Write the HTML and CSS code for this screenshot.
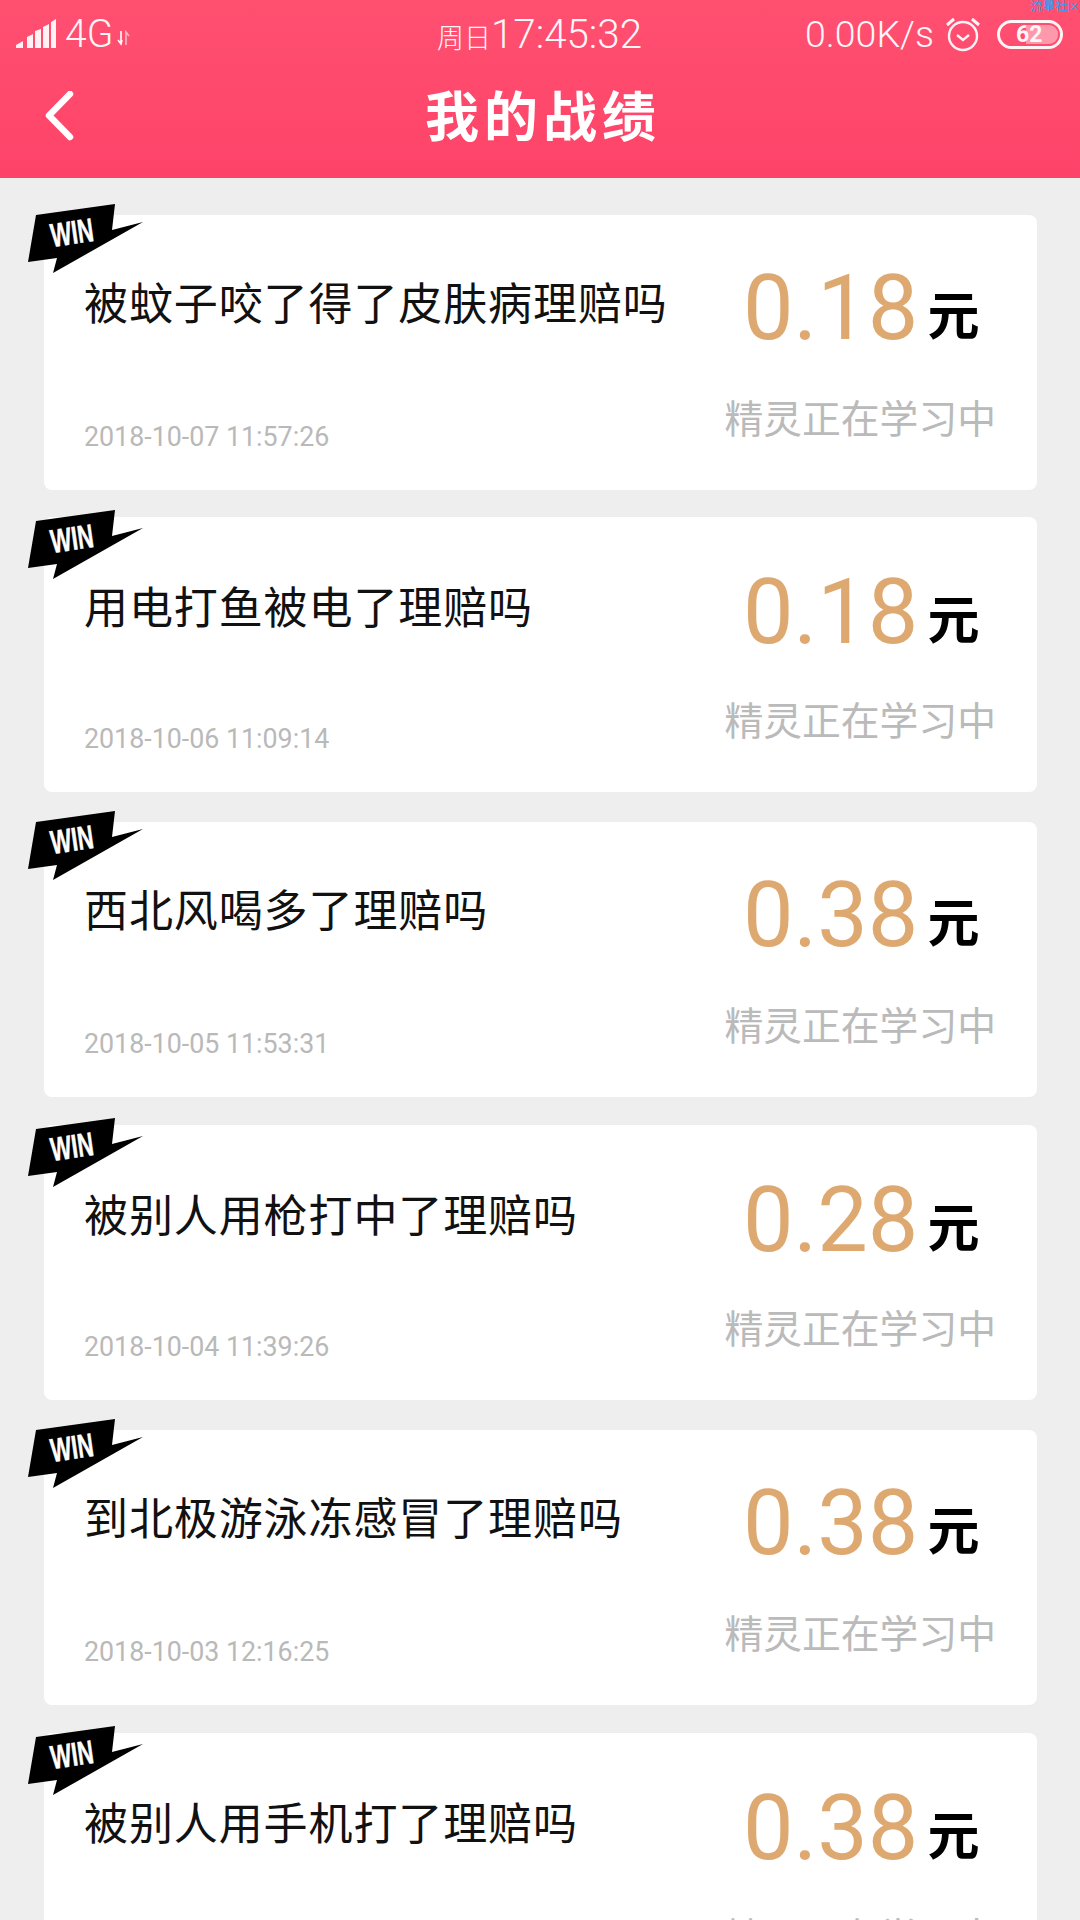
FILE: index.html
```html
<!DOCTYPE html>
<html lang="en">
  <head>
    <meta charset="UTF-8" />
    <title>我的战绩</title>
    <link rel="stylesheet" href="styles.css">
  </head>
  <body>
    <div class="page">
      <div class="watermark">流星社区</div>
      <header class="header">
        <div class="status">
          <div class="status-left">
            <svg class="signal" width="40" height="30" viewBox="0 0 40 30">
              <path d="M0 29v-3l7-4v7zM11 29V18l6-3v14zM19 29V12l6-2v19zM27 29V8l6-3v24zM35 29V3l5-3v29z" fill="#fff" fill-opacity=".92"/>
            </svg>
            <span class="net">4G</span>
            <svg class="arrows" width="14" height="16" viewBox="0 0 14 16">
              <path d="M5 1v12M2 10l3 4 1-4" stroke="#fff" stroke-width="1.6" fill="none"/>
              <path d="M10 15V2l3 4" stroke="#fff" stroke-opacity=".6" stroke-width="1.6" fill="none"/>
            </svg>
          </div>
          <div class="clock"><span class="day">周日</span>17:45:32</div>
          <div class="status-right">
            <span class="speed">0.00K/s</span>
            <svg class="alarm" width="36" height="36" viewBox="0 0 36 36">
              <circle cx="18" cy="20" r="14" fill="none" stroke="#fff" stroke-width="2.4" stroke-opacity=".92"/>
              <path d="M12 19l6 5 6-5" fill="none" stroke="#fff" stroke-width="2.4" stroke-opacity=".92"/>
              <path d="M2 9l7-6M34 9l-7-6" fill="none" stroke="#fff" stroke-width="3" stroke-opacity=".92"/>
            </svg>
            <div class="battery">
              <div class="battery-fill"></div>
              <span class="battery-num">62</span>
            </div>
          </div>
        </div>
        <div class="nav">
          <svg class="back" width="30" height="50" viewBox="0 0 30 50">
            <path d="M26 3L5 24.500 26 46" fill="none" stroke="#fff" stroke-width="6.500" stroke-linecap="round" stroke-linejoin="round"/>
          </svg>
          <h1 class="title">我的战绩</h1>
        </div>
      </header>

      <main class="list">
        <div class="card">
          <svg class="badge" width="115" height="69" viewBox="0 0 115 69"><polygon points="8,11 87,0 84,26 115,18 25,69 29,54 0,58"/></svg>
          <span class="win">WIN</span>
          <div class="card-left">
            <div class="q">被蚊子咬了得了皮肤病理赔吗</div>
            <div class="date">2018-10-07 11:57:26</div>
          </div>
          <div class="card-right">
            <div class="money"><span class="num">0.18</span><span class="unit">元</span></div>
            <div class="state">精灵正在学习中</div>
          </div>
        </div>

        <div class="card">
          <svg class="badge" width="115" height="69" viewBox="0 0 115 69"><polygon points="8,11 87,0 84,26 115,18 25,69 29,54 0,58"/></svg>
          <span class="win">WIN</span>
          <div class="card-left">
            <div class="q">用电打鱼被电了理赔吗</div>
            <div class="date">2018-10-06 11:09:14</div>
          </div>
          <div class="card-right">
            <div class="money"><span class="num">0.18</span><span class="unit">元</span></div>
            <div class="state">精灵正在学习中</div>
          </div>
        </div>

        <div class="card">
          <svg class="badge" width="115" height="69" viewBox="0 0 115 69"><polygon points="8,11 87,0 84,26 115,18 25,69 29,54 0,58"/></svg>
          <span class="win">WIN</span>
          <div class="card-left">
            <div class="q">西北风喝多了理赔吗</div>
            <div class="date">2018-10-05 11:53:31</div>
          </div>
          <div class="card-right">
            <div class="money"><span class="num">0.38</span><span class="unit">元</span></div>
            <div class="state">精灵正在学习中</div>
          </div>
        </div>

        <div class="card">
          <svg class="badge" width="115" height="69" viewBox="0 0 115 69"><polygon points="8,11 87,0 84,26 115,18 25,69 29,54 0,58"/></svg>
          <span class="win">WIN</span>
          <div class="card-left">
            <div class="q">被别人用枪打中了理赔吗</div>
            <div class="date">2018-10-04 11:39:26</div>
          </div>
          <div class="card-right">
            <div class="money"><span class="num">0.28</span><span class="unit">元</span></div>
            <div class="state">精灵正在学习中</div>
          </div>
        </div>

        <div class="card">
          <svg class="badge" width="115" height="69" viewBox="0 0 115 69"><polygon points="8,11 87,0 84,26 115,18 25,69 29,54 0,58"/></svg>
          <span class="win">WIN</span>
          <div class="card-left">
            <div class="q">到北极游泳冻感冒了理赔吗</div>
            <div class="date">2018-10-03 12:16:25</div>
          </div>
          <div class="card-right">
            <div class="money"><span class="num">0.38</span><span class="unit">元</span></div>
            <div class="state">精灵正在学习中</div>
          </div>
        </div>

        <div class="card">
          <svg class="badge" width="115" height="69" viewBox="0 0 115 69"><polygon points="8,11 87,0 84,26 115,18 25,69 29,54 0,58"/></svg>
          <span class="win">WIN</span>
          <div class="card-left">
            <div class="q">被别人用手机打了理赔吗</div>
          </div>
          <div class="card-right">
            <div class="money"><span class="num">0.38</span><span class="unit">元</span></div>
            <div class="state">精灵正在学习中</div>
          </div>
        </div>
      </main>
    </div>
  </body>
</html>
```

FILE: styles.css
```css
* {
  box-sizing: border-box;
}

body {
  margin: 0;
  background: #eeeeee;
  font-family: Roboto, "Noto Sans CJK SC", sans-serif;
}

.page {
  position: relative;
  width: 1080px;
  height: 1920px;
  overflow: hidden;
}

.watermark {
  position: absolute;
  top: 0;
  right: 0;
  font-size: 12.500px;
  line-height: 13px;
  color: #3b9bf0;
}

.header {
  height: 178px;
  background: linear-gradient(#ff5070, #fe4369);
  color: #fff;
}

.status {
  position: relative;
  display: flex;
  justify-content: space-between;
  align-items: center;
  height: 68px;
  padding: 0 17px 0 16px;
}

.status-left,
.status-right {
  display: flex;
  align-items: center;
}

.signal {
  margin-right: 9px;
}

.net {
  font-size: 39px;
  font-weight: 300;
  opacity: 0.95;
}

.arrows {
  margin: 8px 0 0 3px;
}

.clock {
  position: absolute;
  left: 437px;
  top: 12px;
  font-size: 40.300px;
  line-height: 46px;
  font-weight: 300;
  opacity: 0.95;
}

.day {
  font-size: 27px;
}

.speed {
  font-size: 37.500px;
  font-weight: 300;
  opacity: 0.95;
}

.alarm {
  margin: 0 16px 0 11px;
}

.battery {
  position: relative;
  width: 66px;
  height: 29px;
  border: 3px solid #fff;
  border-radius: 15px;
  opacity: 0.95;
}

.battery-fill {
  position: absolute;
  left: 26px;
  right: 2px;
  top: 2px;
  bottom: 2px;
  background: rgba(255, 255, 255, 0.45);
  border-radius: 0 9px 9px 0;
}

.battery-num {
  position: absolute;
  left: 16px;
  top: -3px;
  font-size: 23px;
  line-height: 29px;
  font-weight: 700;
}

.nav {
  position: relative;
  height: 110px;
}

.back {
  position: absolute;
  left: 44px;
  top: 23px;
}

.title {
  margin: 0;
  text-align: center;
  font-size: 54px;
  line-height: 74px;
  padding: 14px 0 0 6px;
  letter-spacing: 5px;
  font-weight: 700;
}

.list {
  padding: 37px 43px 0 44px;
  display: flex;
  flex-direction: column;
  gap: 28px;
}

.card {
  position: relative;
  flex: none;
  display: flex;
  justify-content: space-between;
  height: 275px;
  background: #fff;
  border-radius: 8px;
  padding: 0 41px 0 40px;
}

.card:first-child {
  margin-bottom: -1px;
}

.card:nth-child(even) {
  margin-bottom: 2px;
}

.badge {
  position: absolute;
  left: -16px;
  top: -11px;
}

.card:nth-child(even) .badge {
  top: -7px;
}

.win {
  position: absolute;
  left: -4px;
  top: 0;
  font-family: "Liberation Sans", sans-serif;
  font-size: 33px;
  line-height: 36px;
  font-weight: 700;
  color: #fff;
  -webkit-text-stroke: 0.5px #fff;
  transform: rotate(-8deg) scaleX(0.67);
}

.card:nth-child(even) .win {
  top: 4px;
}

.card-left {
  display: flex;
  flex-direction: column;
  justify-content: space-between;
  padding: 59px 0 38px;
}

.card:nth-child(even) .card-left {
  padding-top: 61px;
}

.q {
  font-size: 44px;
  line-height: 62px;
  letter-spacing: 0.9px;
  color: #111;
}

.date {
  font-size: 26.800px;
  line-height: 30px;
  color: #b9b9b9;
}

.card-right {
  display: flex;
  flex-direction: column;
  align-items: center;
}

.money {
  display: flex;
  align-items: flex-end;
  margin-top: 39px;
  padding-left: 2px;
}

.card:nth-child(even) .money {
  margin-top: 41px;
}

.num {
  font-size: 90px;
  line-height: 110px;
  color: #dea971;
}

.unit {
  margin: 0 0 16px 9px;
  font-size: 52px;
  line-height: 60px;
  font-weight: 700;
  color: #000;
}

.state {
  margin-top: 31px;
  font-size: 38.800px;
  line-height: 50px;
  color: #bababa;
}

.card:nth-child(even) .state {
  margin-top: 29px;
}
```
